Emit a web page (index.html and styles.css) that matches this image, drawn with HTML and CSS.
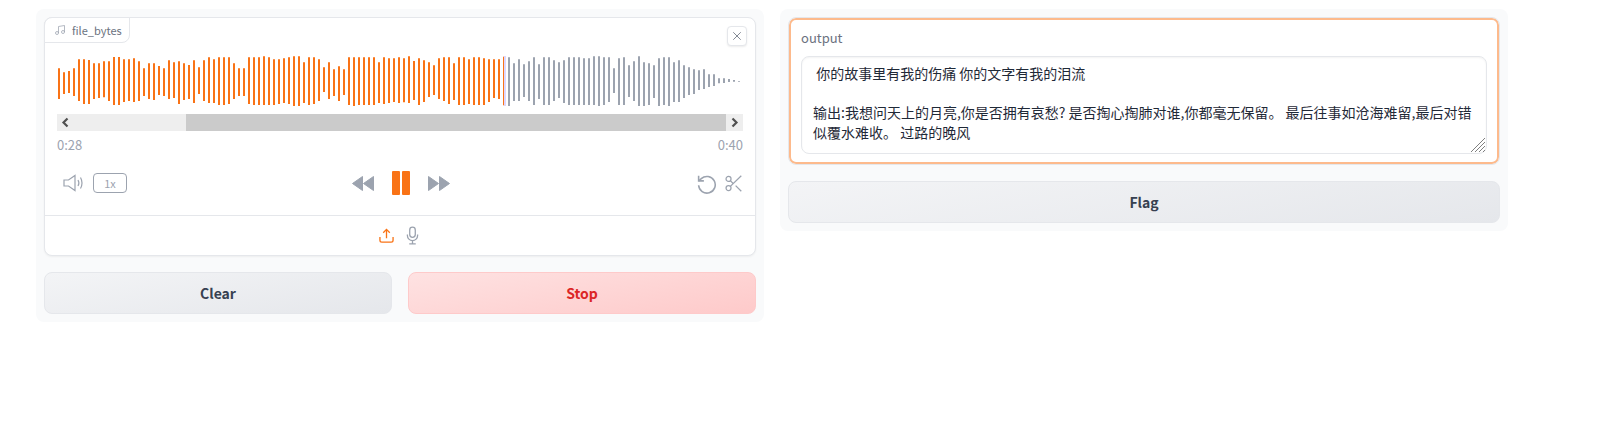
FILE: index.html
```html
<!doctype html>
<html lang="zh-cn">
	<head>
		<meta charset="UTF-8">
		<title>file_bytes</title>
		<link rel="stylesheet" href="styles.css">
	</head>
	<body>
		<div class="page">
			<div class="panel">
				<div class="card audio">
					<div class="tab">
						<svg class="tab-icon" viewBox="0 0 24 24"><path d="M9 18V5l12-2v13"/><circle cx="6" cy="18" r="3"/><circle cx="18" cy="16" r="3"/></svg>
						<span>file_bytes</span>
					</div>
					<button class="close">
						<svg viewBox="0 0 12 12"><path d="M1.500 1.500l9 9M10.500 1.500l-9 9"/></svg>
					</button>

					<div class="track">
						<svg class="wave" viewBox="3 0 2052 180">
							<path class="played" d="M9 55V147M24 67V132M39 63V129M54 55V138M69 28V153M84 28V162M99 30V162M114 40V147M129 40V144M144 34V142M159 34V153M174 21V165M189 21V165M204 28V156M219 28V153M234 25V156M249 34V153M264 55V138M279 40V147M294 40V150M309 48V135M324 55V138M339 31V147M354 37V144M369 34V162M384 40V150M399 45V147M414 31V159M429 52V132M444 31V153M459 22V159M474 28V159M489 22V165M504 22V165M519 22V162M534 40V147M549 55V138M564 55V138M579 22V162M594 22V165M609 22V165M624 19V165M639 22V165M654 28V165M669 28V162M684 25V159M699 22V162M714 19V168M729 19V168M744 37V159M759 22V165M774 22V162M789 28V153M804 52V126M819 37V147M834 58V138M849 49V153M864 58V135M879 22V165M894 22V168M909 22V165M924 22V165M939 22V165M954 22V165M969 37V159M984 22V162M999 25V159M1014 25V156M1029 22V159M1044 25V157M1059 19V159M1074 33V150M1089 25V165M1104 31V156M1119 37V141M1134 46V135M1149 25V147M1164 22V153M1179 22V162M1194 40V150M1209 22V165M1224 22V165M1239 28V162M1254 22V165M1269 22V165M1284 25V165M1299 28V156M1314 28V144M1329 28V147"/>
							<path class="played thin" d="M1342.500 20V166"/>
							<path class="cursor" d="M1347 18V168"/>
							<path class="rest" d="M1359 22V168M1374 40V153M1389 28V153M1404 43V141M1419 34V153M1434 22V165M1449 43V147M1464 22V165M1479 22V165M1494 31V153M1509 37V144M1524 31V159M1539 22V165M1554 22V165M1569 22V165M1584 25V165M1599 25V165M1614 19V165M1629 19V168M1644 22V165M1659 22V156M1674 55V129M1689 25V165M1704 22V165M1719 46V141M1734 34V153M1749 19V168M1764 37V168M1779 40V165M1794 46V144M1809 25V168M1824 22V165M1839 22V168M1854 37V156M1869 31V156M1884 46V144M1899 52V135M1914 58V132M1929 61V120M1944 58V117M1959 73V111M1974 73V108M1989 85V100M2004 85V99M2019 87V96M2034 90V95M2049 93V95"/>
						</svg>

						<div class="scroll">
							<svg class="arrow" viewBox="0 0 17 17"><path d="M10.500 4.500L6.500 8.500l4 4"/></svg>
							<div class="thumb"></div>
							<svg class="arrow" viewBox="0 0 17 17"><path d="M6.500 4.500l4 4-4 4"/></svg>
						</div>

						<div class="times">
							<span>0:28</span>
							<span>0:40</span>
						</div>
					</div>

					<div class="controls">
						<div class="ctl-left">
							<svg class="volume" viewBox="0 0 20 18"><path d="M1 6H5.500L12 1.500V16.500L5.500 12H1Z"/><path d="M15 6q1.800 3 0 6"/><path d="M17.500 3.500q3 5.500 0 11"/></svg>
							<span class="speed">1x</span>
						</div>
						<div class="ctl-mid">
							<svg class="skip" viewBox="0 0 22 15"><path d="M.5 7.500L10.500 .5V14.500ZM11.500 7.500L21.500 .5V14.500Z"/></svg>
							<div class="pause"><i></i><i></i></div>
							<svg class="skip" viewBox="0 0 22 15"><path d="M.5 .5L10.500 7.500L.5 14.500ZM11.500 .5L21.500 7.500L11.500 14.500Z"/></svg>
						</div>
						<div class="ctl-right">
							<svg class="undo" viewBox="0 0 24 24"><path d="M3 3v6h6"/><path d="M3 14a9.500 9.500 0 1 0 3-7.500L3 9"/></svg>
							<svg class="scissors" viewBox="0 0 24 24"><circle cx="5" cy="5.500" r="3.500"/><circle cx="5" cy="18.500" r="3.500"/><path d="M23 1L7.500 16M15 15L23 23M7.500 8L11.500 12"/></svg>
						</div>
					</div>

					<div class="source">
						<svg class="upload" viewBox="0 0 16 16"><path d="M1 9.500V13a2 2 0 0 0 2 2h10a2 2 0 0 0 2-2V9.500"/><path d="M8 11V1.500M4.500 5L8 1.500 11.500 5"/></svg>
						<svg class="mic" viewBox="0 0 14 20"><rect x="4" y="1" width="6" height="11" rx="3"/><path d="M1.500 9v1a5.500 5.500 0 0 0 11 0V9M7 15.500V19M3.500 19h7"/></svg>
					</div>
				</div>

				<div class="btn-row">
					<button class="btn">Clear</button>
					<button class="btn stop">Stop</button>
				</div>
			</div>

			<div class="panel">
				<div class="card output">
					<label class="out-label" for="out">output</label>
					<div class="out-wrap">
						<textarea id="out" class="out-text"> 你的故事里有我的伤痛 你的文字有我的泪流

输出:我想问天上的月亮,你是否拥有哀愁? 是否掏心掏肺对谁,你都毫无保留。 最后往事如沧海难留,最后对错似覆水难收。 过路的晚风</textarea>
						<svg class="grip" viewBox="0 0 14 14"><path d="M0 14L14 0M4 14L14 4M8 14L14 8M12 14L14 12"/></svg>
					</div>
				</div>
				<button class="btn">Flag</button>
			</div>
		</div>
	</body>
</html>
```

FILE: styles.css
```css
html,body,div,span,button,label,textarea {
	margin: 0;
	padding: 0;
	box-sizing: border-box;
}
body {
	background-color: #fff;
	font-family: "Noto Sans CJK SC", "Noto Sans", sans-serif;
	color: #1f2937;
}
svg {
	display: block;
	flex: none;
}
.page {
	display: flex;
	align-items: flex-start;
	gap: 16px;
	padding: 9px 0 0 36px;
}
.panel {
	width: 728px;
	display: flex;
	flex-direction: column;
	gap: 16px;
	padding: 8px;
	background-color: #f9fafb;
	border-radius: 8px;
}
.card {
	position: relative;
	background-color: #fff;
	border: 1px solid #e5e7eb;
	border-radius: 8px;
	box-shadow: 0 1px 2px rgba(0,0,0,.05);
}

/* audio */
.audio {
	height: 239px;
	display: flex;
	flex-direction: column;
}
.tab {
	position: absolute;
	left: -1px;
	top: -1px;
	width: 86px;
	height: 26px;
	display: flex;
	align-items: center;
	gap: 6px;
	padding-left: 9px;
	background-color: #fff;
	border: 1px solid #e5e7eb;
	border-radius: 8px 0 8px 0;
	font-size: 11px;
	color: #6b7280;
}
.tab-icon {
	width: 12px;
	height: 12px;
	fill: none;
	stroke: #9ca3af;
	stroke-width: 1.500;
}
.close {
	position: absolute;
	right: 8px;
	top: 8px;
	width: 20px;
	height: 20px;
	display: flex;
	align-items: center;
	justify-content: center;
	background-color: #fff;
	border: 1px solid #e5e7eb;
	border-radius: 4px;
	box-shadow: 0 1px 2px rgba(0,0,0,.08);
}
.close svg {
	width: 10px;
	height: 10px;
	fill: none;
	stroke: #6b7280;
	stroke-width: 1;
}
.track {
	padding: 32px 12px 0;
}
.wave {
	width: 684px;
	height: 60px;
	fill: none;
	stroke-width: 6;
}
.played {
	stroke: #f97316;
}
.thin {
	stroke-width: 3;
}
.cursor {
	stroke: #ddd6fe;
}
.rest {
	stroke: #9ca3af;
}
.scroll {
	height: 17px;
	margin-top: 4px;
	display: flex;
	justify-content: space-between;
	background-color: #eee;
}
.arrow {
	width: 17px;
	height: 17px;
	fill: none;
	stroke: #505050;
	stroke-width: 2.200;
}
.thumb {
	width: 540px;
	margin-left: auto;
	background-color: #cbcbcb;
}
.times {
	display: flex;
	justify-content: space-between;
	margin-top: 5px;
	font-size: 13px;
	line-height: 18px;
	color: #9ca3af;
}
.controls {
	height: 30px;
	margin-top: 14px;
	padding: 0 13px 0 14px;
	display: grid;
	grid-template-columns: 1fr auto 1fr;
	align-items: center;
}
.ctl-left {
	display: flex;
	align-items: center;
	gap: 10px;
	padding-left: 4px;
}
.volume {
	width: 20px;
	height: 18px;
	fill: none;
	stroke: #9ca3af;
	stroke-width: 1.200;
}
.speed {
	width: 34px;
	height: 20px;
	border: 1px solid #9ca3af;
	border-radius: 4px;
	font-size: 11px;
	line-height: 19px;
	text-align: center;
	color: #9ca3af;
}
.ctl-mid {
	display: flex;
	align-items: center;
	gap: 18px;
}
.skip {
	width: 22px;
	height: 15px;
	fill: #9ca3af;
	stroke: #9ca3af;
	stroke-width: 1;
	stroke-linejoin: round;
}
.pause {
	display: flex;
	gap: 2px;
	width: 18px;
	height: 24px;
}
.pause i {
	flex: 1;
	background-color: #f97316;
	border-radius: 1px;
}
.ctl-right {
	display: flex;
	align-items: center;
	justify-content: flex-end;
	gap: 8px;
}
.undo {
	width: 21px;
	height: 21px;
	fill: none;
	stroke: #9ca3af;
	stroke-width: 1.800;
}
.scissors {
	width: 17px;
	height: 17px;
	fill: none;
	stroke: #9ca3af;
	stroke-width: 1.800;
}
.source {
	flex: 1;
	margin-top: 17px;
	padding-right: 2px;
	display: flex;
	align-items: center;
	justify-content: center;
	gap: 12px;
	border-top: 1px solid #e5e7eb;
}
.upload {
	width: 15px;
	height: 15px;
	fill: none;
	stroke: #f97316;
	stroke-width: 1.400;
}
.mic {
	width: 13px;
	height: 19px;
	fill: none;
	stroke: #9ca3af;
	stroke-width: 1.400;
}

/* buttons */
.btn-row {
	display: flex;
	gap: 16px;
}
.btn {
	height: 42px;
	background: linear-gradient(170deg, #f3f4f6, #e5e7eb);
	border: 1px solid #e5e7eb;
	border-radius: 8px;
	font-family: inherit;
	font-size: 14px;
	font-weight: 600;
	color: #374151;
}
.btn-row .btn {
	flex: 1;
}
.stop {
	background: linear-gradient(170deg, #fee2e2, #fecaca);
	border-color: #fecaca;
	color: #dc2626;
}

/* output */
.output {
	height: 148px;
	padding: 11px 12px 0;
	box-shadow: inset 0 0 0 2px #fdba8c;
}
.out-label {
	display: block;
	height: 18px;
	margin-bottom: 9px;
	font-size: 13px;
	line-height: 18px;
	color: #6b7280;
}
.out-wrap {
	position: relative;
}
.out-text {
	display: block;
	width: 100%;
	height: 98px;
	padding: 7px 11px;
	background-color: #fff;
	border: 1px solid #e5e7eb;
	border-radius: 8px;
	box-shadow: inset 0 1px 2px rgba(0,0,0,.05);
	font-family: inherit;
	font-size: 14px;
	line-height: 19.600px;
	color: #1f2937;
	outline: none;
	overflow: hidden;
	resize: none;
}
.grip {
	position: absolute;
	right: 2px;
	bottom: 2px;
	width: 14px;
	height: 14px;
	fill: none;
	stroke: #808080;
	stroke-width: 1;
}
```
